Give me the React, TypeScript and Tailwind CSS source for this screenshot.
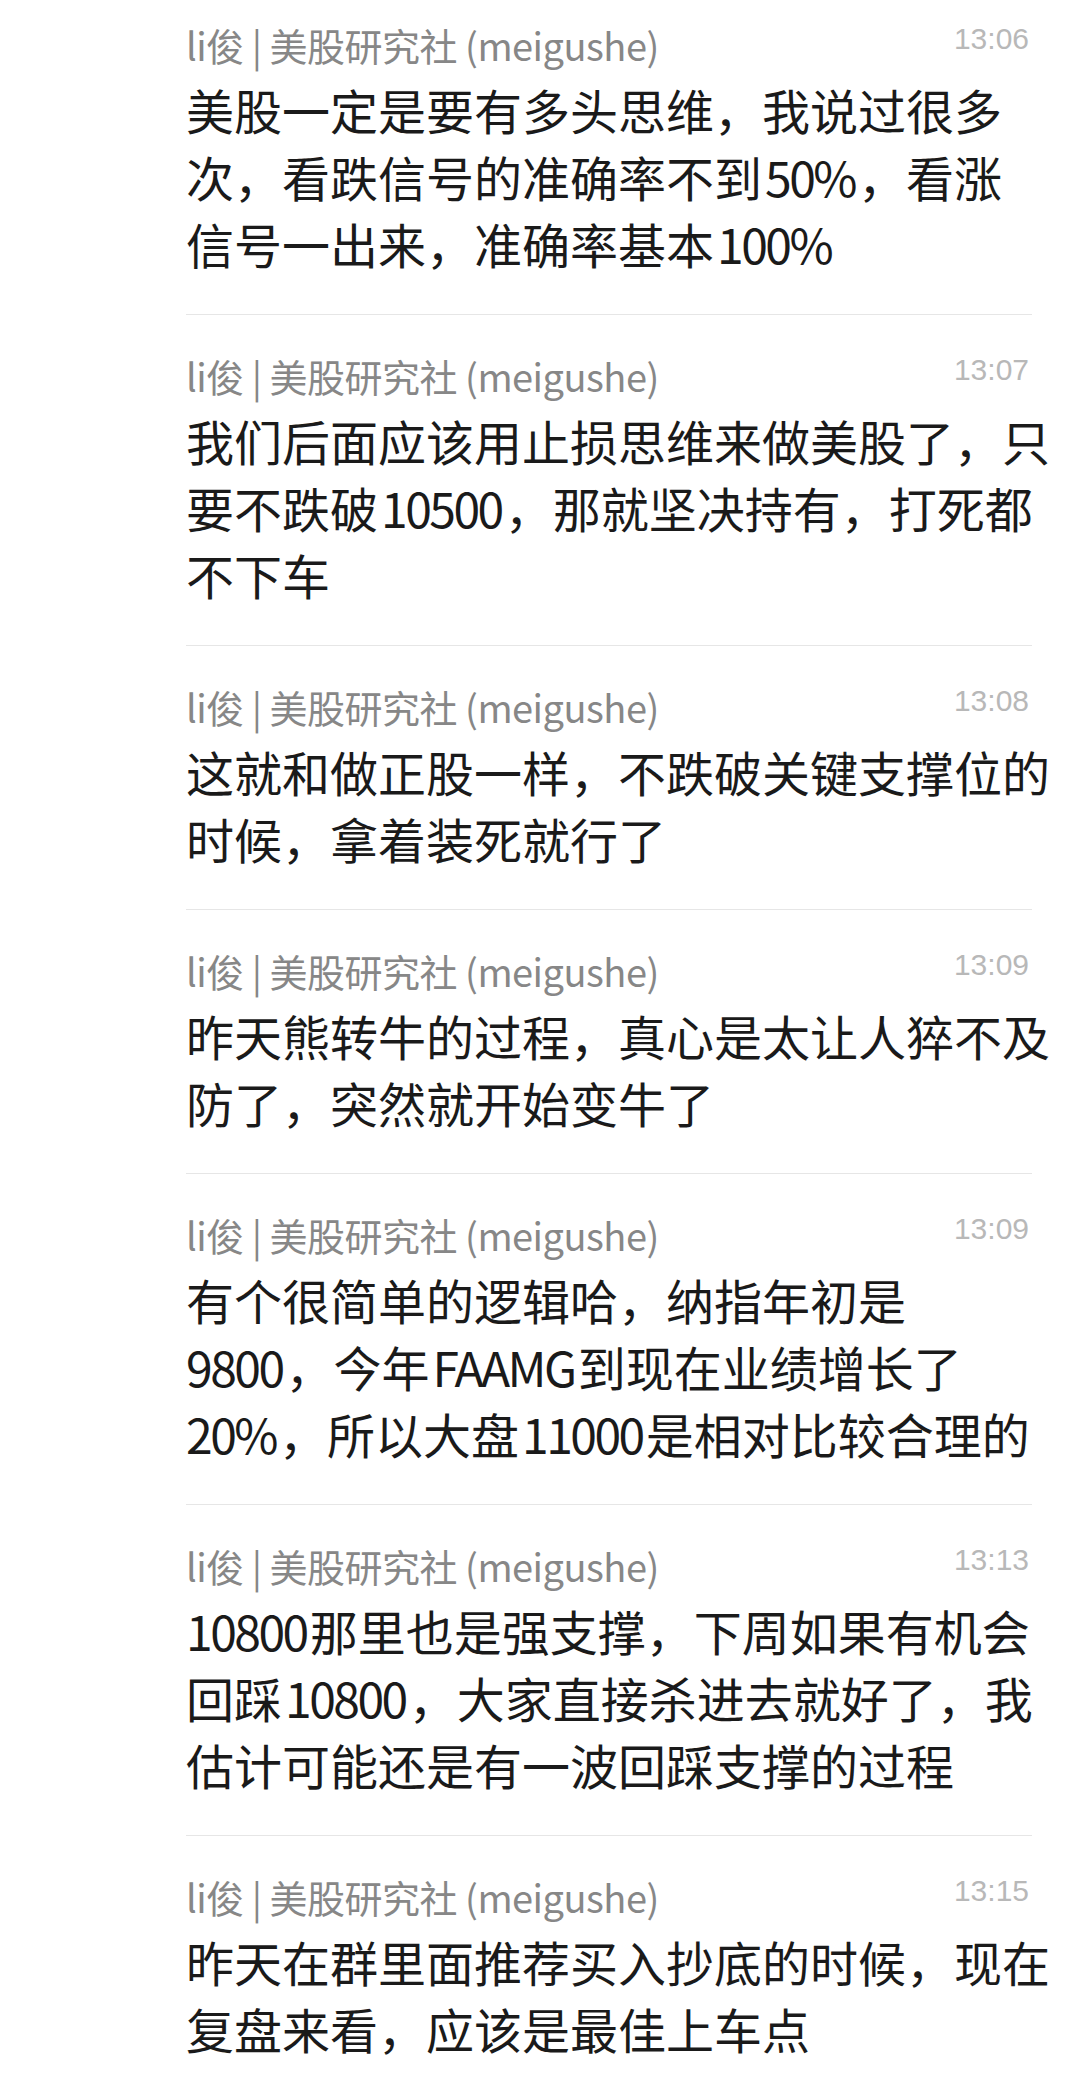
const messages = [
  {
    time: "13:06",
    lines: [
      "美股一定是要有多头思维，我说过很多",
      "次，看跌信号的准确率不到50%，看涨",
      "信号一出来，准确率基本100%",
    ],
  },
  {
    time: "13:07",
    lines: [
      "我们后面应该用止损思维来做美股了，只",
      "要不跌破10500，那就坚决持有，打死都",
      "不下车",
    ],
  },
  {
    time: "13:08",
    lines: ["这就和做正股一样，不跌破关键支撑位的", "时候，拿着装死就行了"],
  },
  {
    time: "13:09",
    lines: ["昨天熊转牛的过程，真心是太让人猝不及", "防了，突然就开始变牛了"],
  },
  {
    time: "13:09",
    lines: [
      "有个很简单的逻辑哈，纳指年初是",
      "9800，今年FAAMG到现在业绩增长了",
      "20%，所以大盘11000是相对比较合理的",
    ],
  },
  {
    time: "13:13",
    lines: [
      "10800那里也是强支撑，下周如果有机会",
      "回踩10800，大家直接杀进去就好了，我",
      "估计可能还是有一波回踩支撑的过程",
    ],
  },
  {
    time: "13:15",
    lines: ["昨天在群里面推荐买入抄底的时候，现在", "复盘来看，应该是最佳上车点"],
  },
];

// latin runs sit a bit tighter than the CJK text around them
function Line({ text }: { text: string }) {
  const parts = text.split(/([A-Za-z0-9%]+)/);
  return (
    <div className="whitespace-nowrap">
      {parts.map((p, k) =>
        k % 2 === 1 ? (
          <span key={k} className={k === 1 && parts[0] === "" ? "mr-[3px] tracking-[-2.5px]" : "mx-[3px] tracking-[-2.5px]"}>
            {p}
          </span>
        ) : (
          <span key={k}>{p}</span>
        )
      )}
    </div>
  );
}

export default function App() {
  return (
    <div className="w-[1080px] min-h-[2094px] bg-white pl-[186px] pr-[48px] font-['Noto_Sans_CJK_SC',sans-serif]">
      {messages.map((m, i) => (
        <div
          key={i}
          className={
            i === 0
              ? "pt-[23px] pb-[37px] border-b border-[#e6e6e6]"
              : i === messages.length - 1
              ? "pt-[39px] pb-[37px]"
              : "pt-[39px] pb-[37px] border-b border-[#e6e6e6]"
          }
        >
          <div className="flex justify-between items-start">
            <span className="text-[38px] leading-[44px] text-[#878787] whitespace-nowrap tracking-[-0.5px]">
              li俊 | 美股研究社 (meigushe)
            </span>

            <span className="text-[30px] leading-[32px] text-[#b8b8b8] font-['Liberation_Sans',sans-serif] pr-[3px]">
              {m.time}
            </span>
          </div>

          <div className="mt-[9px] text-[48px] leading-[67px] text-[#1a1a1a]">
            {m.lines.map((l, j) => (
              <Line key={j} text={l} />
            ))}
          </div>
        </div>
      ))}
    </div>
  );
}
